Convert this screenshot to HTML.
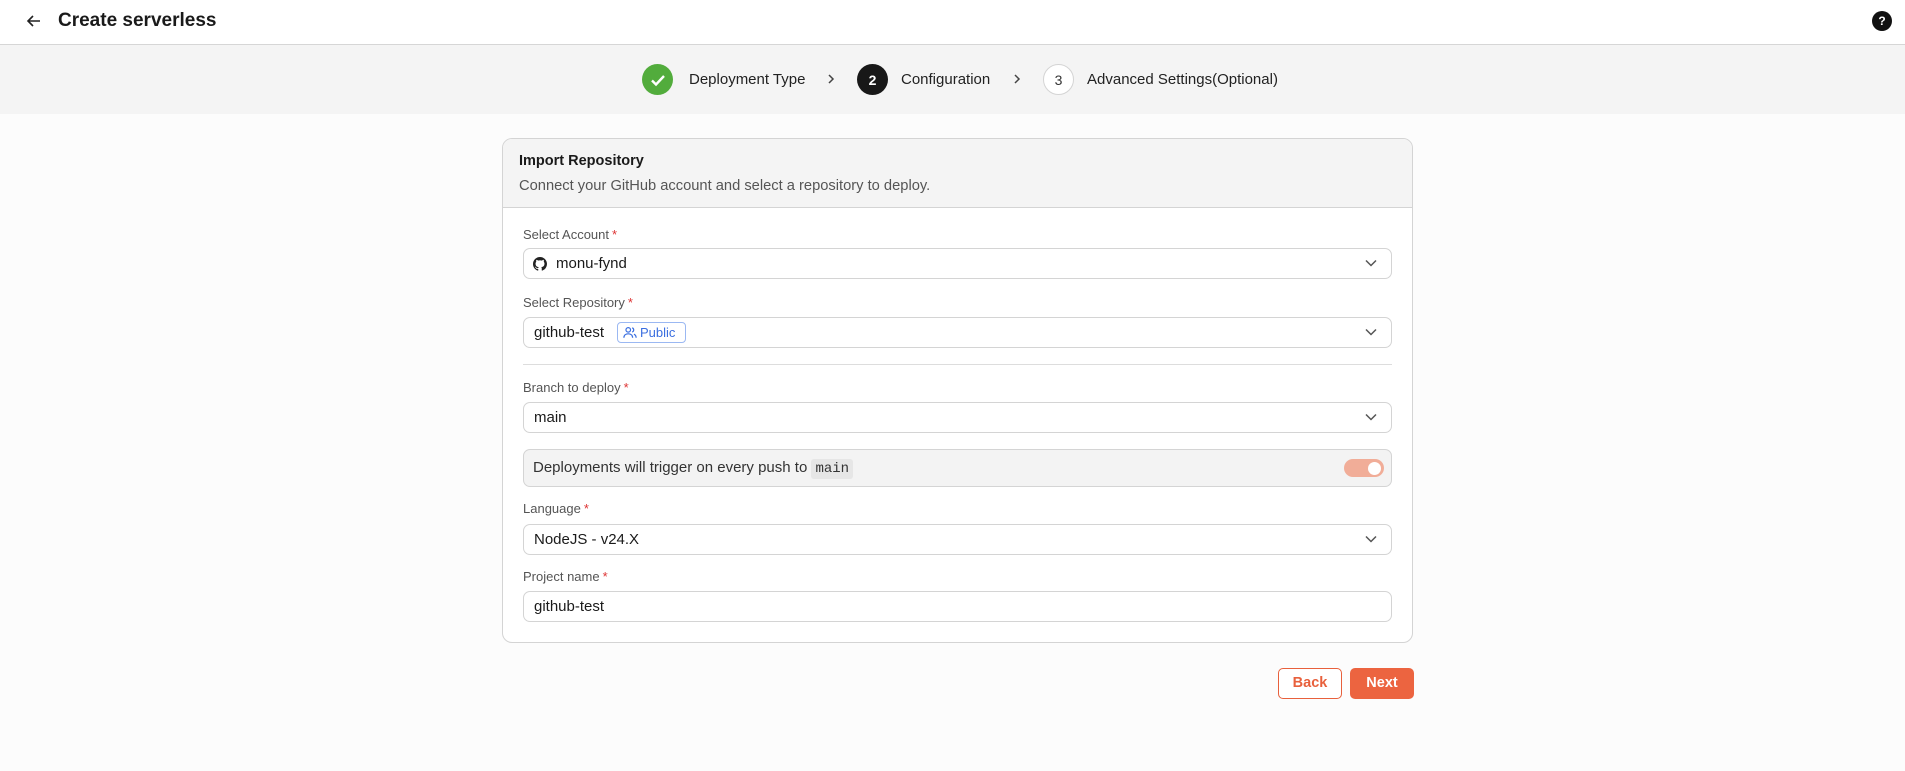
<!DOCTYPE html>
<html><head><meta charset="utf-8"><style>
*{box-sizing:border-box;margin:0;padding:0}
body{width:1905px;height:771px;background:#fcfcfc;font-family:"Liberation Sans",sans-serif;color:#1a1a1a;position:relative;overflow:hidden}
.abs{position:absolute}
.hdr{left:0;top:0;width:1905px;height:45px;border-bottom:1.5px solid #d6d6d6;background:#fff}
.title{left:58px;top:9px;font-size:19px;font-weight:bold;line-height:24px}
.band{left:0;top:45px;width:1905px;height:69px;background:#f4f4f4}
.circ{width:31px;height:31px;border-radius:50%;top:64px;display:flex;align-items:center;justify-content:center;font-size:14px;font-weight:bold}
.st{top:71px;font-size:15px;line-height:18px;color:#222}
.chev{top:71px;width:16px;height:16px}
.card{left:502px;top:138px;width:911px;height:505px;border:1px solid #d4d4d4;border-radius:10px;overflow:hidden;background:#fff}
.chd{left:0;top:0;width:100%;height:69px;background:#f4f4f4;border-bottom:1px solid #d4d4d4}
.lbl{left:523px;font-size:13px;color:#555;line-height:16px}
.lbl b{color:#d33;font-weight:normal;margin-left:3px}
.inp{left:523px;width:869px;height:31px;border:1px solid #d4d4d4;border-radius:7px;background:#fff;font-size:15px;line-height:29px;padding-left:10px;color:#1a1a1a}
.dd{position:absolute;right:14px;top:10px;width:12px;height:8px}
</style></head><body>
<div class="abs hdr"></div>
<svg class="abs" style="left:26px;top:14px" width="16" height="14" viewBox="0 0 16 14"><path d="M14 7H2M7 2L2 7l5 5" fill="none" stroke="#222" stroke-width="1.6"/></svg>
<div class="abs title">Create serverless</div>
<div class="abs" style="left:1872px;top:11px;width:20px;height:20px;border-radius:50%;background:#111;color:#fff;font-size:12px;font-weight:bold;text-align:center;line-height:20px">?</div>
<div class="abs band"></div>
<div class="abs circ" style="left:642px;background:#52ac3c"><svg width="16" height="14" viewBox="0 0 16 14"><path d="M2 7.5l4 4L14 3" fill="none" stroke="#fff" stroke-width="2.4"/></svg></div>
<div class="abs st" style="left:689px">Deployment Type</div>
<svg class="abs chev" style="left:823px" viewBox="0 0 16 16"><path d="M6 4l4 4-4 4" fill="none" stroke="#444" stroke-width="1.5"/></svg>
<div class="abs circ" style="left:857px;background:#181818;color:#fff">2</div>
<div class="abs st" style="left:901px">Configuration</div>
<svg class="abs chev" style="left:1009px" viewBox="0 0 16 16"><path d="M6 4l4 4-4 4" fill="none" stroke="#444" stroke-width="1.5"/></svg>
<div class="abs circ" style="left:1043px;background:#fff;border:1px solid #d4d4d4;color:#333;font-weight:normal">3</div>
<div class="abs st" style="left:1087px">Advanced Settings(Optional)</div>

<div class="abs card"><div class="abs chd"></div></div>
<div class="abs" style="left:519px;top:152px;font-size:14.5px;font-weight:bold;line-height:18px">Import Repository</div>
<div class="abs" style="left:519px;top:177px;font-size:14.7px;color:#555;line-height:18px">Connect your GitHub account and select a repository to deploy.</div>

<div class="abs lbl" style="top:227px">Select Account<b>*</b></div>
<div class="abs inp" style="top:248px;padding-left:32px">monu-fynd
<svg style="position:absolute;left:9px;top:8px" width="14" height="14" viewBox="0 0 16 16"><path fill="#222" d="M8 0C3.58 0 0 3.58 0 8c0 3.54 2.290 6.53 5.47 7.59.4.07.55-.17.55-.38 0-.19-.01-.82-.01-1.49-2.010.37-2.530-.49-2.690-.94-.09-.23-.48-.94-.82-1.130-.28-.15-.68-.52-.01-.53.63-.01 1.080.58 1.230.82.72 1.210 1.870.87 2.330.66.07-.52.28-.87.51-1.070-1.780-.2-3.640-.89-3.640-3.950 0-.87.31-1.590.82-2.150-.08-.2-.36-1.020.08-2.120 0 0 .67-.21 2.200.82.64-.18 1.320-.27 2-.27.68 0 1.360.09 2 .27 1.530-1.040 2.200-.82 2.200-.82.44 1.100.16 1.920.08 2.120.51.56.82 1.270.82 2.150 0 3.070-1.870 3.750-3.650 3.950.29.25.54.73.54 1.480 0 1.070-.01 1.930-.01 2.200 0 .21.15.46.55.38A8.013 8.013 0 0016 8c0-4.420-3.580-8-8-8z"/></svg>
<svg class="dd" viewBox="0 0 12 8"><path d="M1 1.5l5 5 5-5" fill="none" stroke="#555" stroke-width="1.5"/></svg></div>

<div class="abs lbl" style="top:295px">Select Repository<b>*</b></div>
<div class="abs inp" style="top:317px">github-test
<span style="position:absolute;left:93px;top:4px;height:21px;width:69px;border:1px solid #9bb8f2;border-radius:4px;color:#3b6fe0;font-size:13px;line-height:19px;padding-left:22px">Public
<svg style="position:absolute;left:5px;top:3px" width="14" height="13" viewBox="0 0 16 14"><g fill="none" stroke="#3b6fe0" stroke-width="1.4"><circle cx="6" cy="4" r="2.6"/><path d="M1 13c0-3 2.2-4.5 5-4.5s5 1.5 5 4.5"/><path d="M10.5 1.6a2.6 2.6 0 010 4.9M12.5 9c1.6.6 2.5 2 2.5 4"/></g></svg></span>
<svg class="dd" viewBox="0 0 12 8"><path d="M1 1.5l5 5 5-5" fill="none" stroke="#555" stroke-width="1.5"/></svg></div>

<div class="abs" style="left:523px;top:364px;width:869px;height:1px;background:#ddd"></div>

<div class="abs lbl" style="top:380px">Branch to deploy<b>*</b></div>
<div class="abs inp" style="top:402px">main<svg class="dd" viewBox="0 0 12 8"><path d="M1 1.5l5 5 5-5" fill="none" stroke="#555" stroke-width="1.5"/></svg></div>

<div class="abs" style="left:523px;top:449px;width:869px;height:38px;border:1px solid #d4d4d4;border-radius:7px;background:#f3f3f3;font-size:15px;color:#333;line-height:36px;padding-left:9px">Deployments will trigger on every push to <span style="font-family:'Liberation Mono',monospace;font-size:14px;background:#e6e6e6;border-radius:3px;padding:2px 4px">main</span>
<div style="position:absolute;left:820px;top:9px;width:40px;height:18px;border-radius:9px;background:#f1ad98"><div style="position:absolute;right:3px;top:2.5px;width:13px;height:13px;border-radius:50%;background:#fff"></div></div></div>

<div class="abs lbl" style="top:501px">Language<b>*</b></div>
<div class="abs inp" style="top:524px">NodeJS - v24.X<svg class="dd" viewBox="0 0 12 8"><path d="M1 1.5l5 5 5-5" fill="none" stroke="#555" stroke-width="1.5"/></svg></div>

<div class="abs lbl" style="top:569px">Project name<b>*</b></div>
<div class="abs inp" style="top:591px">github-test</div>

<div class="abs" style="left:1278px;top:668px;width:64px;height:31px;border:1px solid #e8603c;border-radius:5px;color:#e8603c;font-size:14.5px;font-weight:bold;text-align:center;line-height:29px;background:#fff">Back</div>
<div class="abs" style="left:1350px;top:668px;width:64px;height:31px;background:#ec6440;border-radius:5px;color:#fff;font-size:14.5px;font-weight:bold;text-align:center;line-height:31px">Next</div>
</body></html>
